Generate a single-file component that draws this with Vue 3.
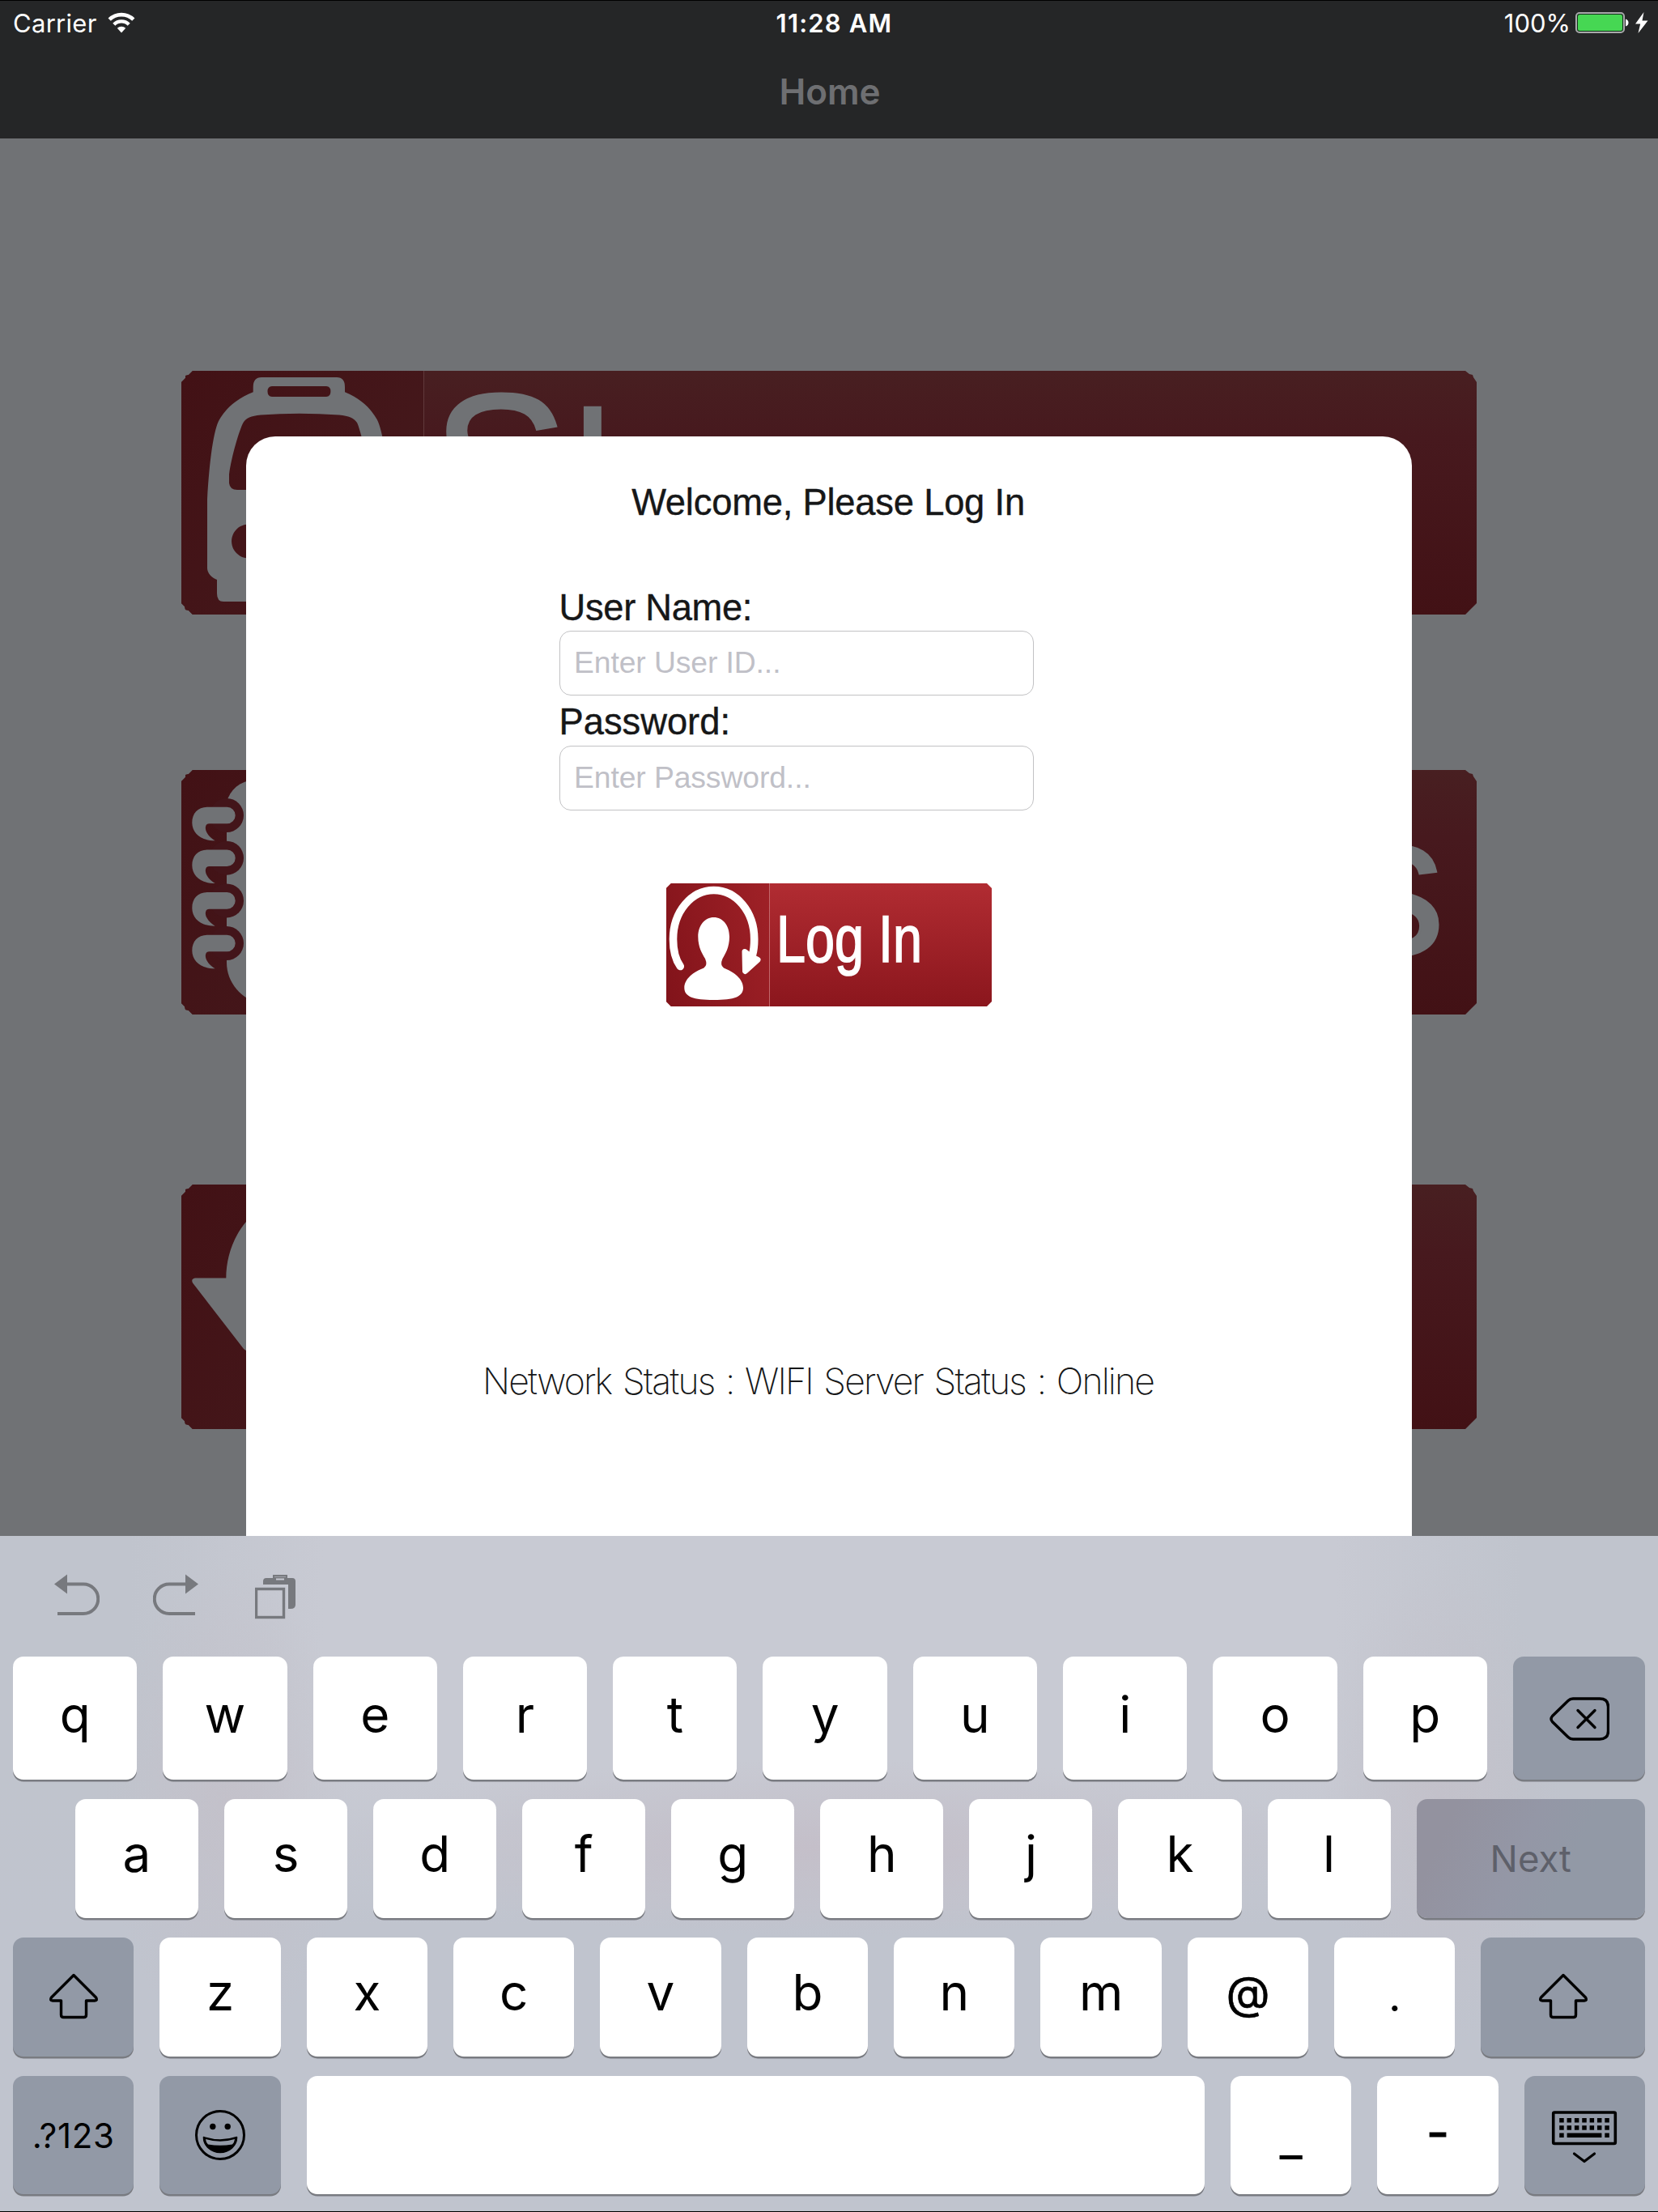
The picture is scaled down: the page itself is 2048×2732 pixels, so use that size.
<script setup>
const row1 = ['q', 'w', 'e', 'r', 't', 'y', 'u', 'i', 'o', 'p']
const row2 = ['a', 's', 'd', 'f', 'g', 'h', 'j', 'k', 'l']
const row3 = ['z', 'x', 'c', 'v', 'b', 'n', 'm']
const rings = [0, 52.7, 105.4, 158]
const dots = [0, 1, 2, 3, 4, 5, 6]
</script>

<template>
  <div class="screen">
    <header class="top">
      <div class="status">
        <div class="carrier">
          <span class="carrier-name">Carrier</span>
          <svg class="wifi" width="34" height="26" viewBox="0 0 34 26">
            <path d="M2.2 9.2a21 21 0 0 1 29.6 0" fill="none" stroke="#fff" stroke-width="4.6" />
            <path d="M7.8 15.2a13 13 0 0 1 18.4 0" fill="none" stroke="#fff" stroke-width="4.4" />
            <path d="M17 25.4l-5.2-5.6a7.4 7.4 0 0 1 10.4 0z" fill="#fff" />
          </svg>
        </div>
        <span class="clock">11:28 AM</span>
        <div class="power">
          <span class="percent">100%</span>
          <svg class="battery" width="90" height="28" viewBox="0 0 90 28">
            <rect x="1" y="2" width="59" height="24" rx="4" fill="#12301a" stroke="#a9a9ab" stroke-width="2" />
            <rect x="3" y="4" width="55" height="20" rx="2.5" fill="#46d753" />
            <path d="M62 9.500q3.500 1 3.500 4.500t-3.500 4.500z" fill="#fff" />
            <path d="M84.500 1L74 15.500h6.200L77.500 27 89.500 11.500h-7z" fill="#fff" />
          </svg>
        </div>
      </div>
      <div class="title">Home</div>
    </header>

    <main class="home">
      <section class="tile">
        <svg class="tile-icon" width="300" height="302" viewBox="0 0 300 302">
          <path
            fill-rule="evenodd"
            fill="#707275"
            d="M88.700 26.300V20Q88.700 8 99 8H192Q202 8 202 20V26.300C222 34 235 48 241.800 60.300C248 72 255 110 258 158.700V243.700C258 250 253 256 246.800 258V275Q246.800 285 238 285H52Q44 285 44 275V258C38 256 32 250 32 243.700V158.700C34.800 110 40 72 47 60.300C54 48 68 34 88.700 26.300ZM112 19Q106.500 19 106.500 25.500T112 32H179Q184.400 32 184.400 25.500T179 19ZM98 54.500C86 56 80 58 76.500 64C72 72 62 105 59 128V138.700Q60 147 69 147H222Q231 147 231.800 138.700V128C229 105 221 72 217 64C213 58 207 56 195 54.500Q145 51 98 54.500ZM83 189.500a21 21 0 1 0 .1 0ZM208 189.500a21 21 0 1 0 .1 0Z"
          />
        </svg>
        <div class="tile-label head">S<span class="stem">t</span></div>
      </section>

      <section class="tile second">
        <svg class="tile-icon" width="300" height="302" viewBox="0 0 300 302">
          <path d="M56 40C60 24 72 14 90 12H240V288H98C74 284 56 262 56 238Z" fill="#707275" />
          <g v-for="y in rings" :key="y" :transform="`translate(0 ${y})`">
            <circle cx="56" cy="56" r="21" fill="#43151a" />
            <path
              d="M56.400 45.700H32C20 45.700 13.300 54 13.300 65C13.300 78 24 87.300 41.700 87.300C33 82 29 75 30 70Q30.500 66.300 34.500 66.300H56.400A10.300 10.300 0 0 0 56.400 45.700Z"
              fill="#707275"
            />
          </g>
        </svg>
        <div class="tile-label tail">s</div>
      </section>

      <section class="tile third">
        <svg class="tile-icon" width="300" height="302" viewBox="0 0 300 302">
          <path d="M150 10C105 10 90 34 80 46C63 66 55.300 92 55.300 115.500H17Q11.500 116.500 14 121.500L77 203Q80 206 84 206H150Z" fill="#707275" />
        </svg>
      </section>
    </main>

    <div class="modal">
      <h1 class="welcome">Welcome, Please Log In</h1>
      <form class="form" @submit.prevent>
        <label class="label" for="user">User Name:</label>
        <input id="user" class="field" type="text" placeholder="Enter User ID..." />
        <label class="label next" for="pass">Password:</label>
        <input id="pass" class="field" type="text" placeholder="Enter Password..." />
      </form>
      <button class="login" type="button">
        <svg class="login-icon" width="128" height="152" viewBox="0 0 128 152">
          <path d="M17.300 102.500C10.500 93 8.500 81 8.500 69C8.500 35 31 8.500 58.700 8.500S108.700 35 108.700 69C108.700 78 108 83 106.500 88" fill="none" stroke="#fff" stroke-width="9.600" stroke-linecap="round" />
          <path d="M97 84.500L104 90L113 94.500L97.500 108.500Z" fill="#fff" stroke="#fff" stroke-width="7" stroke-linejoin="round" />
          <path d="M58.700 42C70 42 78 52 78 66C78 79 73 87 69.500 93Q66 101 71 104.500C83 109 95 118 95 129C95 140 84 144 58.700 144S22.300 140 22.300 129C22.300 118 34 109 46.400 104.500Q51.500 101 48 93C44.500 87 39.300 79 39.300 66C39.300 52 47.500 42 58.700 42Z" fill="#fff" />
        </svg>
        <span class="login-text">Log In</span>
      </button>
      <p class="network">Network Status : WIFI Server Status : Online</p>
    </div>

    <div class="keyboard">
      <div class="tools">
        <svg width="56" height="52" viewBox="0 0 56 52">
          <path d="M14 12.500H36A18.250 18.250 0 0 1 36 49H4" fill="none" stroke="#77797e" stroke-width="4" />
          <path d="M0 12.500L16 .5V24.500Z" fill="#77797e" />
        </svg>
        <svg width="56" height="52" viewBox="0 0 56 52">
          <path d="M42 12.500H20A18.250 18.250 0 0 0 20 49H52" fill="none" stroke="#77797e" stroke-width="4" />
          <path d="M56 12.500L40 .5V24.500Z" fill="#77797e" />
        </svg>
        <svg width="52" height="56" viewBox="0 0 52 56">
          <path d="M10 13V9Q10 5 14 5H46Q50 5 50 9V38Q50 43 44 43H41V13Z" fill="#77797e" />
          <path d="M23 2H39V10H23Z" fill="#c8cad3" stroke="#77797e" stroke-width="2" />
          <rect x="25" y="4.500" width="12" height="4" fill="#c8cad3" stroke="#77797e" stroke-width="2" />
          <rect x="1.500" y="18.500" width="34" height="35" fill="none" stroke="#77797e" stroke-width="3.400" />
        </svg>
      </div>

      <div class="row first">
        <div v-for="k in row1" :key="k" class="key"><span class="glyph">{{ k }}</span></div>
        <div class="key dark back">
          <svg width="74" height="54" viewBox="0 0 74 54">
            <path d="M29 2H62Q72.500 2 72.500 12V42Q72.500 52 62 52H29Q25.500 52 23 49.500L3.500 30.500Q.5 27 3.500 23.500L23 4.500Q25.500 2 29 2Z" fill="none" stroke="#000" stroke-width="3.400" />
            <path d="M35 16.500L56 37.500M56 16.500L35 37.500" stroke="#000" stroke-width="3.400" stroke-linecap="round" />
          </svg>
        </div>
      </div>

      <div class="row second-row">
        <div v-for="k in row2" :key="k" class="key"><span class="glyph">{{ k }}</span></div>
        <div class="key dark next-key"><span class="next-text">Next</span></div>
      </div>

      <div class="row">
        <div class="key dark">
          <svg class="shift" width="62" height="57" viewBox="0 0 62 57">
            <path d="M31 2.500L58.500 30Q61 34 57 34H46.500V51.500Q46.500 54.500 43.500 54.500H18.500Q15.500 54.500 15.500 51.500V34H5Q1 34 3.500 30Z" fill="none" stroke="#000" stroke-width="3.400" stroke-linejoin="round" />
          </svg>
        </div>
        <div v-for="k in row3" :key="k" class="key"><span class="glyph">{{ k }}</span></div>
        <div class="key"><span class="glyph at">@</span></div>
        <div class="key"><span class="glyph dot">.</span></div>
        <div class="key dark wide-shift">
          <svg class="shift" width="62" height="57" viewBox="0 0 62 57">
            <path d="M31 2.500L58.500 30Q61 34 57 34H46.500V51.500Q46.500 54.500 43.500 54.500H18.500Q15.500 54.500 15.500 51.500V34H5Q1 34 3.500 30Z" fill="none" stroke="#000" stroke-width="3.400" stroke-linejoin="round" />
          </svg>
        </div>
      </div>

      <div class="row">
        <div class="key dark fixed"><span class="numbers">.?123</span></div>
        <div class="key dark fixed">
          <svg width="62" height="62" viewBox="0 0 62 62">
            <circle cx="31" cy="31" r="29.500" fill="none" stroke="#000" stroke-width="3" />
            <circle cx="21.800" cy="20.500" r="3.700" />
            <circle cx="40.200" cy="20.500" r="3.700" />
            <path d="M10.500 33.500Q31 40.500 51.500 33.500C52 44 42 52.500 31 52.500S10 44 10.500 33.500Z" stroke="#000" stroke-width="1.500" stroke-linejoin="round" />
            <path d="M13 36Q31 41.500 49 36Q48.500 40 46 42.500Q31 45 16 42.500Q13.500 40 13 36Z" fill="#939aa6" />
          </svg>
        </div>
        <div class="key"></div>
        <div class="key fixed"><span class="glyph underscore">_</span></div>
        <div class="key fixed"><span class="glyph hyphen">-</span></div>
        <div class="key dark fixed">
          <svg class="dismiss" width="82" height="66" viewBox="0 0 82 66">
            <rect x="2.700" y="2" width="76.600" height="38.500" rx="1.500" fill="none" stroke="#000" stroke-width="3.600" />
            <g v-for="d in dots" :key="d">
              <rect :x="10.200 + d * 9.350" y="9" width="5.500" height="5.500" />
              <rect :x="10.200 + d * 9.350" y="18.200" width="5.500" height="5.500" />
            </g>
            <rect x="10.200" y="27.500" width="5.500" height="5.500" />
            <rect x="19.600" y="27.500" width="42.800" height="5.500" />
            <rect x="66.300" y="27.500" width="5.500" height="5.500" />
            <path d="M28.500 53L41 62.500L53.500 53" fill="none" stroke="#000" stroke-width="3.200" stroke-linecap="round" stroke-linejoin="round" />
          </svg>
        </div>
      </div>
    </div>
  </div>
</template>

<style>
body {
  margin: 0;
  background: #707275;
}
</style>

<style scoped>
.screen {
  position: relative;
  width: 2048px;
  height: 2732px;
  overflow: hidden;
  background: #707275;
  font-family: 'Liberation Sans', Arial, sans-serif;
}
svg {
  display: block;
  flex: none;
}
.top {
  box-sizing: border-box;
  height: 171px;
  border-top: 1px solid #000;
  background: #252627;
  font-family: Inter, sans-serif;
  color: #fff;
}
.status {
  display: flex;
  justify-content: space-between;
  align-items: center;
  height: 54px;
  padding: 0 12px 0 16px;
}
.carrier,
.power {
  display: flex;
  align-items: center;
  flex: 1;
}
.power {
  justify-content: flex-end;
}
.carrier-name,
.percent {
  font-size: 31px;
}
.carrier-name {
  letter-spacing: 0.3px;
}
.wifi {
  margin-left: 13px;
}
.clock {
  font-size: 31px;
  font-weight: 600;
  letter-spacing: 1.2px;
  margin-left: 9px;
}
.battery {
  margin-left: 6px;
}
.title {
  line-height: 54px;
  padding: 31px 0 0 2px;
  text-align: center;
  font-size: 44px;
  font-weight: 600;
  color: #6e6f72;
}
.home {
  padding: 287px 224px 0;
}
.tile {
  position: relative;
  display: flex;
  height: 301px;
  overflow: hidden;
  background:
    linear-gradient(#60393b, #60393b) 299px 0 / 1px 100% no-repeat,
    linear-gradient(120deg, #421115, #451a1d) 0 0 / 299px 100% no-repeat,
    linear-gradient(#481f21, #47191e 28%, #421115);
  clip-path: polygon(0 14px, 5px 9px, 5px 6px, 9px 5px, 14px 0, calc(100% - 14px) 0, calc(100% - 9px) 4px, calc(100% - 5px) 5px, calc(100% - 4px) 8px, 100% 14px, 100% calc(100% - 14px), calc(100% - 5px) calc(100% - 9px), calc(100% - 9px) calc(100% - 5px), calc(100% - 14px) 100%, 14px 100%, 9px calc(100% - 5px), 5px calc(100% - 6px), 4px calc(100% - 10px), 0 calc(100% - 14px));
}
.tile.second {
  margin-top: 192px;
  height: 302px;
}
.tile.third {
  margin-top: 210px;
  height: 302px;
}
.tile-label {
  font-size: 250px;
  line-height: 270px;
  color: #707275;
  -webkit-text-stroke: 3px #707275;
}
.tile-label.head {
  margin: -17px 0 0 9px;
  font-size: 254px;
}
.stem {
  display: inline-block;
  margin-left: -4px;
  font-family: Inter, sans-serif;
  font-size: 320px;
  line-height: 0;
  transform: translateY(54px) scaleX(0.78);
  transform-origin: 0 50%;
  -webkit-text-stroke: 0;
}
.tile-label.tail {
  margin: 7px 39px 0 auto;
}
.modal {
  position: absolute;
  left: 304px;
  top: 539px;
  width: 1440px;
  height: 1400px;
  border-radius: 36px 36px 0 0;
  background: #fff;
  color: #161718;
  display: flex;
  flex-direction: column;
}
.welcome {
  margin: 55px 2px 0 0;
  text-align: center;
  font-size: 45.3px;
  font-weight: 400;
  line-height: 54px;
  letter-spacing: -0.2px;
  -webkit-text-stroke: 0.4px #161718;
}
.form {
  margin: 76px 0 0 387px;
  width: 585.500px;
  display: flex;
  flex-direction: column;
}
.label {
  font-size: 45.300px;
  line-height: 54px;
  margin: 0 0 1px -0.5px;
  letter-spacing: -0.3px;
  -webkit-text-stroke: 0.4px #161718;
}
.label.next {
  margin: 6px 0 2px -0.5px;
  letter-spacing: 0;
}
.field {
  box-sizing: border-box;
  width: 585.500px;
  height: 80px;
  padding: 0 16px 1px 17px;
  border: 1.500px solid #c2c2c4;
  border-radius: 14px;
  background: #fff;
  font-family: inherit;
  font-size: 37.300px;
  letter-spacing: -0.1px;
  color: #161718;
  outline: none;
}
.field::placeholder {
  color: #c0c0c7;
  opacity: 1;
}
.login {
  display: flex;
  width: 402px;
  height: 152px;
  margin: 90px 0 0 519px;
  padding: 0;
  border: 0;
  background:
    linear-gradient(#c2686b, #c2686b) 127px 0 / 1px 100% no-repeat,
    linear-gradient(75deg, #81131a, #9f2127) 0 0 / 127px 100% no-repeat,
    linear-gradient(#b12c32, #8b161d);
  clip-path: polygon(0 6px, 6px 0, calc(100% - 6px) 0, 100% 6px, 100% calc(100% - 6px), calc(100% - 6px) 100%, 6px 100%, 0 calc(100% - 6px));
  color: #fff;
}
.login-text {
  margin-left: 8px;
  font-family: 'Liberation Sans', Arial, sans-serif;
  font-size: 81px;
  line-height: 139px;
  white-space: nowrap;
  transform: scaleX(0.8);
  transform-origin: 0 50%;
  -webkit-text-stroke: 1.6px #fff;
}
.network {
  margin: 436px 0 0 292px;
  font-family: Inter, sans-serif;
  font-weight: 200;
  font-size: 44.500px;
  line-height: 54px;
  letter-spacing: -1.85px;
  word-spacing: 3px;
  white-space: nowrap;
}
.keyboard {
  position: absolute;
  left: 0;
  top: 1897px;
  width: 2048px;
  height: 835px;
  box-sizing: border-box;
  padding: 0 16px;
  border-bottom: 1px solid #000;
  background:
    radial-gradient(ellipse 620px 110px at 1024px 385px, rgba(196, 190, 200, 0.9), rgba(196, 190, 200, 0)),
    radial-gradient(ellipse 150px 300px at 280px 330px, rgba(195, 191, 200, 0.75), rgba(195, 191, 200, 0)),
    radial-gradient(ellipse 150px 300px at 1780px 330px, rgba(195, 191, 200, 0.75), rgba(195, 191, 200, 0)),
    linear-gradient(rgba(193, 197, 208, 0) 300px, #c0c4ce 480px),
    linear-gradient(90deg, #c0c4cd 160px, #c8cad3 400px, #c8cad3 1650px, #c0c4cd 1880px);
  font-family: Inter, sans-serif;
  color: #000;
}
.tools {
  display: flex;
  align-items: flex-start;
  gap: 66px;
  height: 102px;
  padding: 47px 0 0 51px;
}
.tools svg:last-child {
  margin-left: 4px;
}
.row {
  display: flex;
  gap: 32px;
  height: 146.600px;
  margin-top: 24.200px;
}
.row.first {
  height: 152px;
  margin-top: 0;
}
.first .glyph {
  margin-bottom: 8px;
}
.first svg {
  margin: 2px 0 0 2px;
}
.second-row {
  padding-left: 77px;
}
.key {
  flex: 1 1 0;
  min-width: 0;
  display: flex;
  align-items: center;
  justify-content: center;
  border-radius: 13px;
  background: #fff;
  box-shadow: 0 2.500px 0 #797b81;
}
.key.dark {
  background: #9299a6;
}
.key.fixed {
  flex: none;
  width: 149.300px;
}
.back {
  flex: none;
  width: 163px;
}
.key.next-key {
  flex: none;
  width: 282.500px;
  background: linear-gradient(115deg, #93929f 15%, #9497a6 45%, #9299a6 65%);
}
.wide-shift {
  flex: none;
  width: 202.500px;
}
.glyph {
  font-size: 62px;
  line-height: 76px;
  margin-bottom: 10px;
}
.at {
  font-size: 56px;
  -webkit-text-stroke: 0.6px #000;
}
.dot {
  font-size: 54px;
  margin-bottom: 3px;
}
.underscore {
  margin-bottom: 0;
  padding-top: 5px;
}
.hyphen {
  margin-bottom: 6px;
  -webkit-text-stroke: 1px #000;
}
.next-text {
  font-size: 45.5px;
  color: #5e606a;
}
.numbers {
  font-size: 42px;
  letter-spacing: 0.7px;
}
.shift {
  margin-bottom: 2px;
}
.dismiss {
  margin-top: 6px;
}
</style>
